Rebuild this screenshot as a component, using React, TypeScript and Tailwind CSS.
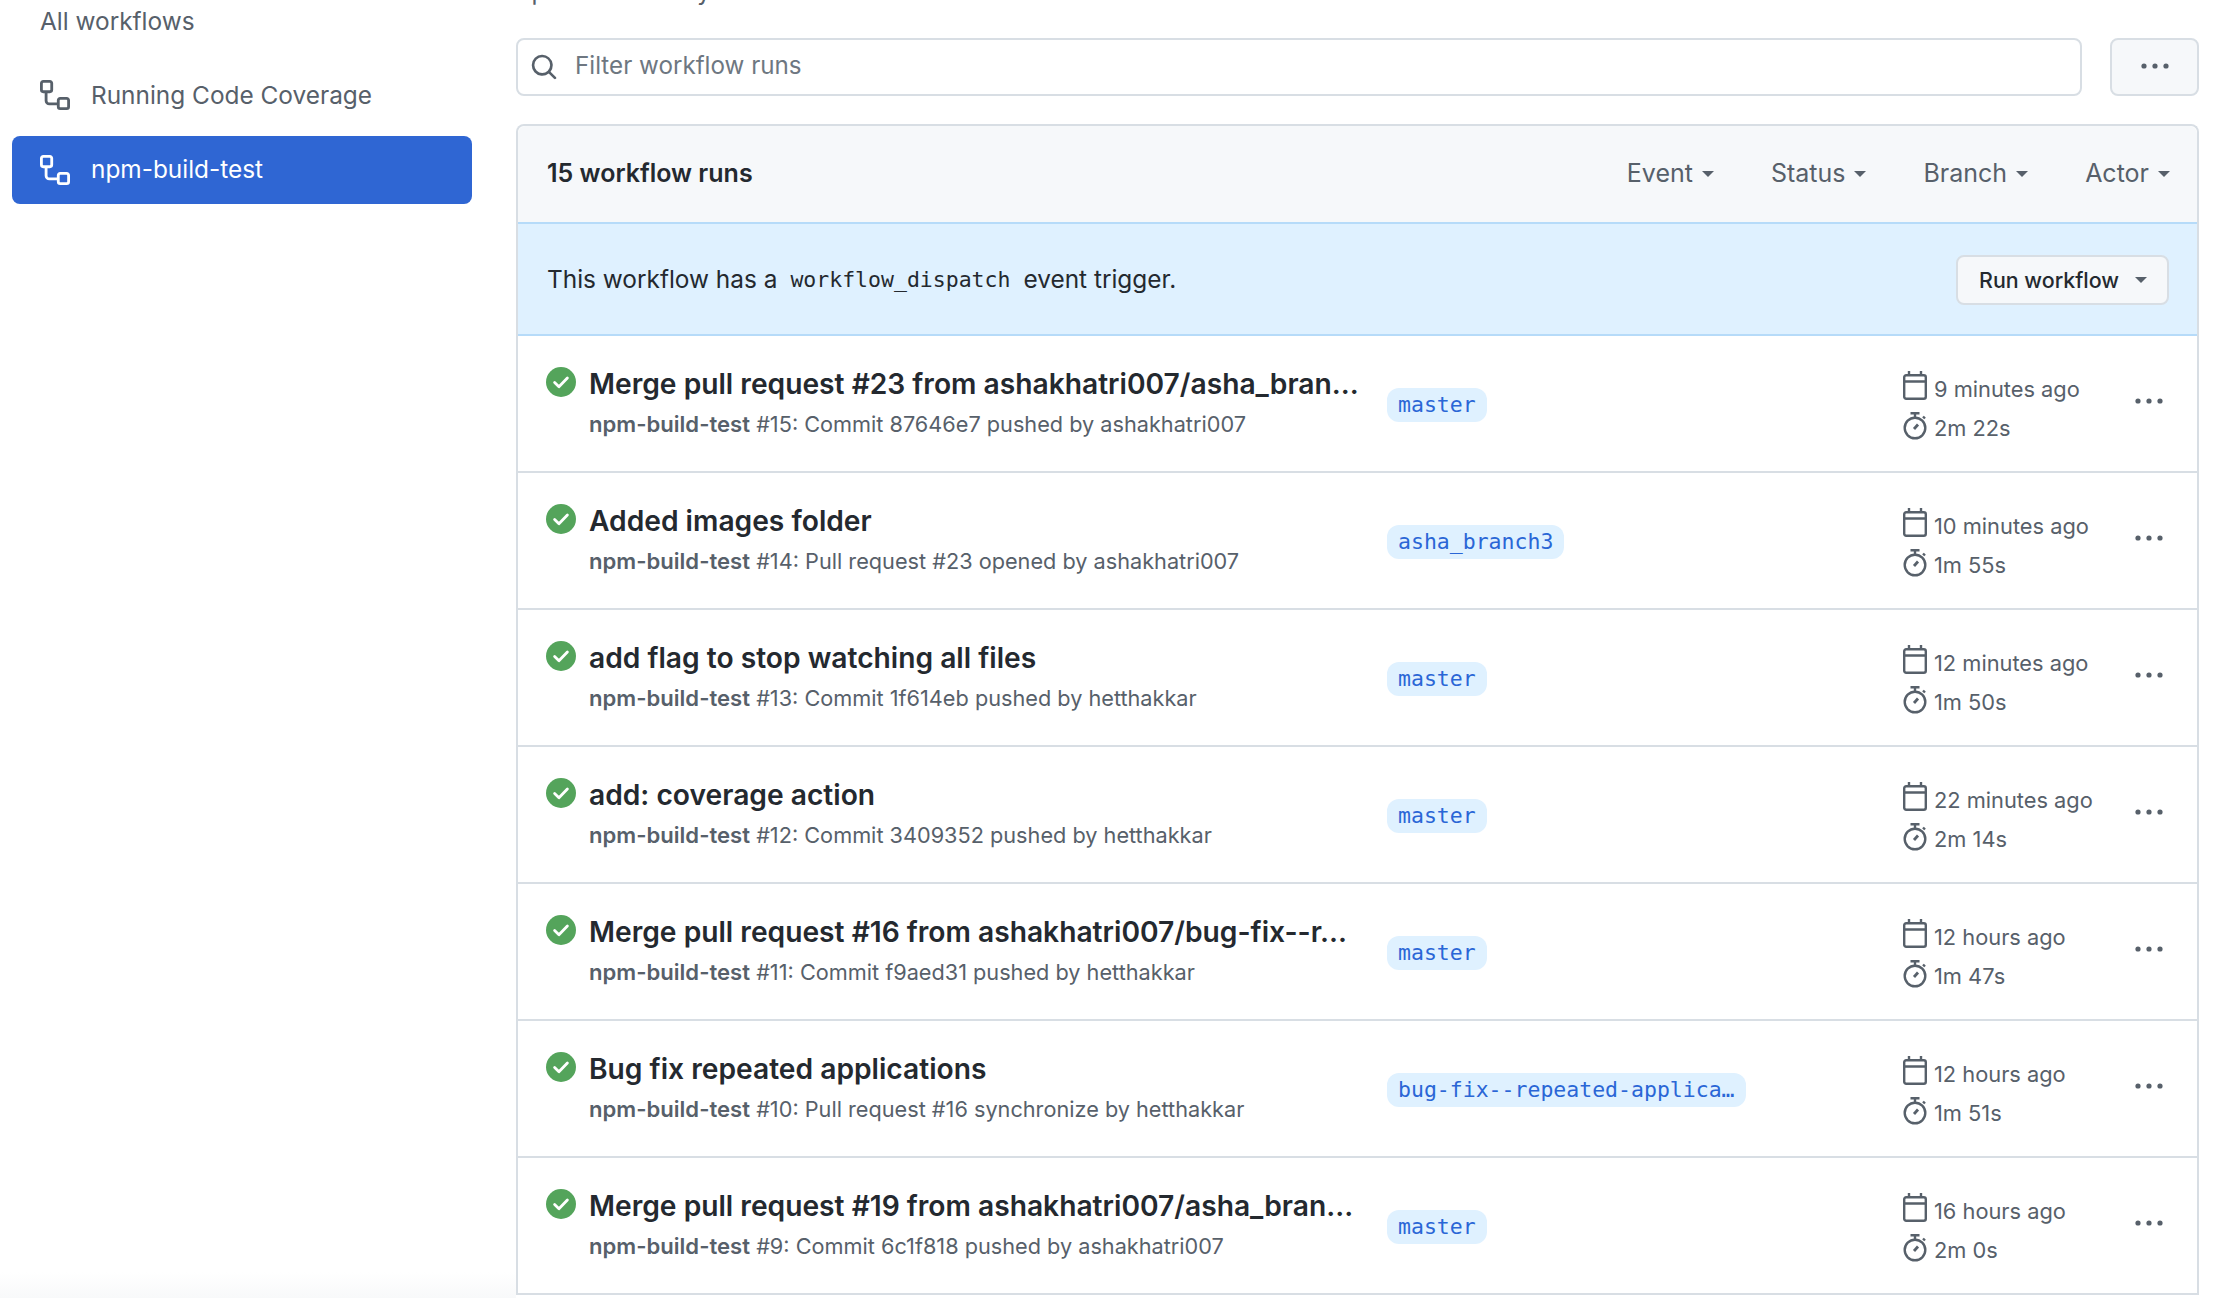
const runs = [
  { title: "Merge pull request #23 from ashakhatri007/asha_bran...", num: "#15", desc: "Commit 87646e7 pushed by ashakhatri007", branch: "master", ago: "9 minutes ago", dur: "2m 22s" },
  { title: "Added images folder", num: "#14", desc: "Pull request #23 opened by ashakhatri007", branch: "asha_branch3", ago: "10 minutes ago", dur: "1m 55s" },
  { title: "add flag to stop watching all files", num: "#13", desc: "Commit 1f614eb pushed by hetthakkar", branch: "master", ago: "12 minutes ago", dur: "1m 50s" },
  { title: "add: coverage action", num: "#12", desc: "Commit 3409352 pushed by hetthakkar", branch: "master", ago: "22 minutes ago", dur: "2m 14s" },
  { title: "Merge pull request #16 from ashakhatri007/bug-fix--r...", num: "#11", desc: "Commit f9aed31 pushed by hetthakkar", branch: "master", ago: "12 hours ago", dur: "1m 47s" },
  { title: "Bug fix repeated applications", num: "#10", desc: "Pull request #16 synchronize by hetthakkar", branch: "bug-fix--repeated-applica…", ago: "12 hours ago", dur: "1m 51s" },
  { title: "Merge pull request #19 from ashakhatri007/asha_bran...", num: "#9", desc: "Commit 6c1f818 pushed by ashakhatri007", branch: "master", ago: "16 hours ago", dur: "2m 0s" },
];

function WorkflowIcon() {
  return (
    <svg width="30" height="30" viewBox="0 0 16 16" fill="currentColor" className="shrink-0">
      <path d="M0 1.75C0 .784.784 0 1.75 0h3.5C6.216 0 7 .784 7 1.75v3.5A1.75 1.75 0 0 1 5.25 7H4v4a1 1 0 0 0 1 1h4v-1.25C9 9.784 9.784 9 10.75 9h3.5c.966 0 1.75.784 1.75 1.75v3.5A1.75 1.75 0 0 1 14.25 16h-3.5A1.75 1.75 0 0 1 9 14.25v-.75H5A2.5 2.5 0 0 1 2.5 11V7h-.75A1.75 1.75 0 0 1 0 5.25Zm1.75-.25a.25.25 0 0 0-.25.25v3.5c0 .138.112.25.25.25h3.5a.25.25 0 0 0 .25-.25v-3.5a.25.25 0 0 0-.25-.25Zm9 9a.25.25 0 0 0-.25.25v3.5c0 .138.112.25.25.25h3.5a.25.25 0 0 0 .25-.25v-3.5a.25.25 0 0 0-.25-.25Z" />
    </svg>
  );
}

function Caret() {
  return <span className="ml-[9px] inline-block h-0 w-0 border-x-[6.5px] border-t-[6.5px] border-x-transparent border-t-current" />;
}

function Dots({ className }: { className?: string }) {
  return (
    <svg width="30" height="8" viewBox="0 0 30 8" fill="currentColor" className={className}>
      <circle cx="4" cy="4" r="2.6" />
      <circle cx="15" cy="4" r="2.6" />
      <circle cx="26" cy="4" r="2.6" />
    </svg>
  );
}

function CheckIcon() {
  return (
    <svg width="30" height="30" viewBox="0 0 16 16" className="shrink-0">
      <circle cx="8" cy="8" r="8" fill="#54a45b" />
      <path d="M4.6 8.3l2.3 2.2 4.5-4.6" fill="none" stroke="#fff" strokeWidth="1.5" strokeLinecap="round" strokeLinejoin="round" />
    </svg>
  );
}

function CalendarIcon() {
  return (
    <svg width="24" height="29" viewBox="0 0 24 29" fill="none" stroke="currentColor" strokeWidth="2.4" className="-mt-2 shrink-0">
      <rect x="1.2" y="4.2" width="21.6" height="23.6" rx="2" />
      <path d="M1.2 10.5h21.6M6 0v4M18 0v4" />
    </svg>
  );
}

function StopwatchIcon() {
  return (
    <svg width="24" height="28" viewBox="0 0 24 28" fill="none" stroke="currentColor" strokeWidth="2.4" className="-mt-[6px] shrink-0">
      <circle cx="12" cy="16" r="10.3" />
      <path d="M7.5 1.2h9M12 1.2v4M20 4.5l2 2" />
      <path d="M11 17l4-4.5" strokeWidth="2.8" />
    </svg>
  );
}

export default function App() {
  return (
    <div className="flex h-[1298px] w-[2218px] overflow-hidden bg-white font-['Inter',sans-serif] text-[#24292f]">
      {/* sidebar */}
      <div className="flex w-[516px] shrink-0 flex-col bg-gradient-to-b from-white from-[98%] to-[#f8f9fa] pl-3 text-[24.4px] text-[#57606a]">
        <div className="flex h-[42px] items-center pl-7">All workflows</div>
        <div className="mt-[19px] flex h-[68px] w-[460px] items-center gap-[21px] pl-7">
          <WorkflowIcon />
          Running Code Coverage
        </div>
        <div className="mt-[7px] flex h-[68px] w-[460px] items-center gap-[21px] rounded-lg bg-[#2f66d3] pb-[1px] pl-7 text-white">
          <WorkflowIcon />
          npm-build-test
        </div>
      </div>

      {/* main */}
      <div className="flex w-[1683px] shrink-0 flex-col">
        <div className="-mt-[24px] h-[30px] pl-[1px] text-[24.5px] leading-[30px] text-[#57606a]">npm-build-test.yml</div>
        <div className="mt-[32px] flex gap-[28px]">
          <div className="flex h-[58px] w-[1566px] items-center gap-[17px] rounded-lg border-2 border-[#d8dee4] pb-[2px] pl-[12px] text-[24.2px] text-[#6e7781]">
            <svg width="28" height="28" viewBox="0 0 16 16" fill="#57606a" className="mt-[2px] shrink-0">
              <path d="M10.68 11.74a6 6 0 0 1-7.922-8.982 6 6 0 0 1 8.982 7.922l3.04 3.04a.749.749 0 0 1-1.06 1.06ZM11.5 7a4.499 4.499 0 1 0-8.997 0A4.499 4.499 0 0 0 11.5 7Z" />
            </svg>
            Filter workflow runs
          </div>
          <div className="flex h-[58px] w-[89px] items-center justify-center rounded-lg border-2 border-[#d8dee4] bg-[#f6f8fa] pb-[2px] text-[#57606a]">
            <Dots />
          </div>
        </div>

        <div className="mt-[28px] rounded-t-lg border-x-2 border-t-2 border-[#d8dee4]">
          <div className="flex h-[96px] items-center justify-between rounded-t-lg bg-[#f6f8fa] pl-[29px] pr-[27px] text-[25px]">
            <span className="font-semibold">15 workflow runs</span>
            <div className="flex gap-[57px] text-[#57606a]">
              {["Event", "Status", "Branch", "Actor"].map((f) => (
                <span key={f} className="flex items-center">
                  {f}
                  <Caret />
                </span>
              ))}
            </div>
          </div>

          <div className="flex h-[114px] items-center justify-between border-y-2 border-[#b6dbf9] bg-[#dff1ff] pl-[29px] pr-7 text-[24.4px]">
            <span className="flex items-center">
              This workflow has a
              <code className="mx-[13px] mt-[2px] font-['DejaVu_Sans_Mono',monospace] text-[21.5px]">workflow_dispatch</code>
              event trigger.
            </span>
            <div className="mt-[2px] flex h-[50px] items-center rounded-lg border-2 border-[#d8dee4] bg-[#f6f8fa] pl-[21px] pr-[20px] text-[21.4px] font-medium">
              Run workflow
              <span className="ml-[7px] flex text-[#57606a]">
                <Caret />
              </span>
            </div>
          </div>

          {runs.map((r) => (
            <div key={r.num} className="flex h-[137px] items-start border-b-2 border-[#d8dee4] pl-7">
              <div className="mt-[31px] flex w-[43px] shrink-0">
                <CheckIcon />
              </div>
              <div className="w-[798px] shrink-0 pt-[30px]">
                <div className="text-[28.2px] font-semibold leading-[36px]">{r.title}</div>
                <div className="mt-[7px] text-[21.7px] leading-[30px] text-[#57606a]">
                  <span className="text-[22.1px] font-semibold">npm-build-test</span> {r.num}: {r.desc}
                </div>
              </div>
              <div className="w-[516px] shrink-0 pt-[52px]">
                <span className="inline-block rounded-xl bg-[#dff1ff] px-[11px] font-['DejaVu_Sans_Mono',monospace] text-[21.5px] leading-[34px] text-[#2a66d6]">
                  {r.branch}
                </span>
              </div>
              <div className="w-[231px] shrink-0 pt-[34px] text-[21.8px] text-[#57606a]">
                <div className="flex h-[39px] items-center gap-[7px]">
                  <CalendarIcon />
                  {r.ago}
                </div>
                <div className="flex h-[39px] items-center gap-[7px]">
                  <StopwatchIcon />
                  {r.dur}
                </div>
              </div>
              <div className="pt-[61px] text-[#57606a]">
                <Dots />
              </div>
            </div>
          ))}
        </div>
      </div>
    </div>
  );
}
